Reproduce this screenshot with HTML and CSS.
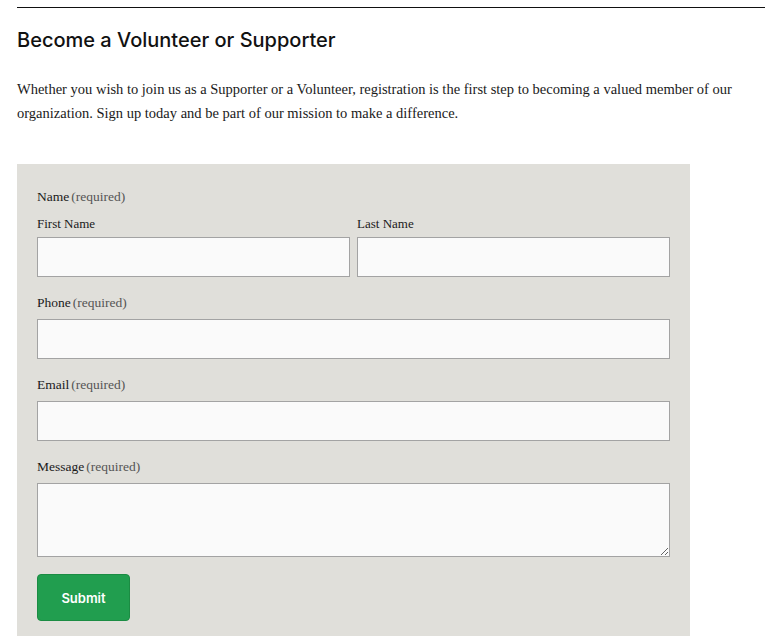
FILE: index.html
```html
<!DOCTYPE html>
<html lang="en">
<head>
<meta charset="utf-8">
<title>Become a Volunteer or Supporter</title>
<link rel="stylesheet" href="styles.css">
</head>
<body>
<main class="page">
  <hr class="rule">
  <h2 class="title">Become a Volunteer or Supporter</h2>
  <p class="intro">Whether you wish to join us as a Supporter or a Volunteer, registration is the first step to becoming a valued member of our organization. Sign up today and be part of our mission to make a difference.</p>
  <form class="form">
    <fieldset class="field">
      <div class="label">Name<span class="req">(required)</span></div>
      <div class="name-row">
        <label class="sub">
          <span class="sublabel">First Name</span>
          <input class="input" type="text">
        </label>
        <label class="sub">
          <span class="sublabel">Last Name</span>
          <input class="input" type="text">
        </label>
      </div>
    </fieldset>
    <label class="field">
      <span class="label">Phone<span class="req">(required)</span></span>
      <input class="input" type="tel">
    </label>
    <label class="field">
      <span class="label">Email<span class="req">(required)</span></span>
      <input class="input" type="email">
    </label>
    <label class="field">
      <span class="label">Message<span class="req">(required)</span></span>
      <textarea class="input textarea"></textarea>
    </label>
    <div class="actions">
      <button class="submit" type="button">Submit</button>
    </div>
  </form>
</main>
</body>
</html>
```
FILE: styles.css
```css
html, body {
  margin: 0;
  padding: 0;
  background: #ffffff;
}
.page {
  width: 748px;
  margin: 0 0 0 17px;
  padding-top: 7px;
  font-family: "Liberation Serif", "DejaVu Serif", serif;
  color: #1a1a1a;
}
.rule {
  margin: 0;
  border: 0;
  border-top: 1px solid #111111;
}
.title {
  margin: 20px 0 0;
  font-family: Inter, "Noto Sans", sans-serif;
  font-weight: 500;
  font-size: 20px;
  line-height: 24px;
  color: #111111;
}
.intro {
  margin: 25px 0 0;
  font-size: 14.5px;
  line-height: 24px;
  color: #1a1a1a;
}
.form {
  margin-top: 39px;
  width: 633px;
  background: #e0dfda;
  padding: 24px 20px 15px;
  display: flex;
  flex-direction: column;
  gap: 17px;
}
.field {
  margin: 0;
  padding: 0;
  border: 0;
  display: flex;
  flex-direction: column;
  gap: 7px;
  min-width: 0;
}
.label {
  font-size: 13.5px;
  line-height: 18px;
  color: #1a1a1a;
}
.req {
  margin-left: 2px;
  color: #555555;
}
.name-row {
  display: flex;
  gap: 7px;
  margin-top: 3px;
}
.sub {
  flex: 1;
  display: flex;
  flex-direction: column;
  gap: 5px;
}
.sublabel {
  font-size: 13px;
  line-height: 16px;
  color: #1a1a1a;
}
.input {
  box-sizing: border-box;
  width: 100%;
  height: 40px;
  margin: 0;
  border: 1px solid #a3a3a3;
  background: #fafafa;
  font: inherit;
  padding: 6px 8px;
}
.textarea {
  height: 74px;
  resize: vertical;
  display: block;
}
.submit {
  width: 93px;
  height: 47px;
  border: 1px solid #1b8c43;
  border-radius: 4px;
  background: #219e4f;
  color: #ffffff;
  font-family: Inter, "Noto Sans", sans-serif;
  font-weight: 600;
  font-size: 13px;
  cursor: pointer;
}
```
